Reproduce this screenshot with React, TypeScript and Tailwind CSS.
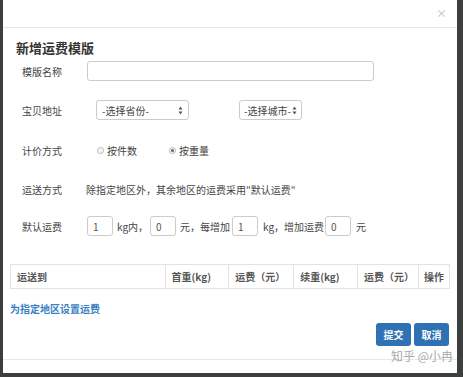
const font = { fontFamily: '"Noto Sans CJK SC", "Liberation Sans", sans-serif' };

function Arrows() {
  return (
    <svg width="5" height="9" viewBox="0 0 5 9" className="ml-auto">
      <path d="M2.5 0.5 L4.5 3.5 H0.5 Z" fill="#555" />
      <path d="M2.5 8.5 L4.5 5.5 H0.5 Z" fill="#555" />
    </svg>
  );
}

function Radio({ checked, label }: { checked?: boolean; label: string }) {
  return (
    <div className="flex items-center gap-[3px]">
      <span className="flex h-[7px] w-[7px] items-center justify-center rounded-full border border-[#bbb] bg-[#f4f4f4]">
        {checked ? <span className="h-[3px] w-[3px] rounded-full bg-[#666]" /> : null}
      </span>
      <span>{label}</span>
    </div>
  );
}

function SmallInput({ value }: { value: string }) {
  return (
    <div className="flex h-[20px] w-[26px] items-center rounded-[3px] border border-[#ccc] bg-white pl-[5px] text-[10px] text-[#555]">
      {value}
    </div>
  );
}

export default function App() {
  const columns = [
    { label: "运送到", w: "w-[154px]" },
    { label: "首重(kg)", w: "w-[64px]" },
    { label: "运费（元）", w: "w-[65px]" },
    { label: "续重(kg)", w: "w-[64px]" },
    { label: "运费（元）", w: "w-[61px]" },
    { label: "操作", w: "flex-1" },
  ];

  return (
    <div className="h-[377px] w-[463px] bg-[#3c3f3e]" style={font}>
      <div className="relative ml-[3px] flex h-[373px] w-[454px] flex-col bg-white text-[10px] text-[#444]">
        <div className="flex h-[28px] items-center justify-end border-b border-[#e6e6e6] pr-[10px]">
          <span className="text-[11px] text-[#bbb]">×</span>
        </div>

        <div className="flex flex-col px-[7px]">
          <div className="mt-[11px] pl-[6px] text-[13px] font-bold leading-[17px] text-[#333]">新增运费模版</div>

          <div className="mt-[5px] flex h-[20px] items-center">
            <span className="w-[77px] pl-[12px]">模版名称</span>
            <div className="h-[20px] w-[287px] rounded-[3px] border border-[#ccc] bg-white" />
          </div>

          <div className="mt-[19px] flex h-[20px] items-center">
            <span className="w-[86px] pl-[12px]">宝贝地址</span>
            <div className="flex h-[20px] w-[93px] items-center rounded-[3px] border border-[#ccc] bg-white px-[5px] text-[#444]">
              -选择省份-
              <Arrows />
            </div>
            <div className="ml-[50px] flex h-[20px] w-[63px] items-center rounded-[3px] border border-[#ccc] bg-white px-[4px] text-[#444]">
              -选择城市-
              <Arrows />
            </div>
          </div>

          <div className="mt-[20px] flex h-[20px] items-center">
            <span className="w-[87px] pl-[12px]">计价方式</span>
            <Radio label="按件数" />
            <div className="ml-[32px]">
              <Radio checked label="按重量" />
            </div>
          </div>

          <div className="mt-[19px] flex h-[20px] items-center">
            <span className="w-[76px] pl-[12px]">运送方式</span>
            <span>除指定地区外，其余地区的运费采用"默认运费"</span>
          </div>

          <div className="mt-[17px] flex h-[20px] items-center">
            <span className="w-[77px] pl-[12px]">默认运费</span>
            <SmallInput value="1" />
            <span className="ml-[4px] w-[33px]">kg内，</span>
            <SmallInput value="0" />
            <span className="ml-[4px] w-[52px]">元，每增加</span>
            <SmallInput value="1" />
            <span className="ml-[5px] w-[62px]">kg，增加运费</span>
            <SmallInput value="0" />
            <span className="ml-[5px]">元</span>
          </div>

          <div className="mt-[28px] flex h-[25px] w-[440px] items-stretch border border-[#e2e2e2] font-semibold text-[#555]">
            {columns.map((c, i) => (
              <div
                key={i}
                className={`flex items-center whitespace-nowrap ${i === 5 ? "px-[5px]" : "px-[6px]"} ${c.w} ${i > 0 ? "border-l border-[#e2e2e2]" : ""}`}
              >
                {c.label}
              </div>
            ))}
          </div>

          <div className="mt-[12px] font-semibold text-[#3a80c4]">为指定地区设置运费</div>

          <div className="mt-[7px] flex justify-end gap-[3px] pr-[1px]">
            <button className="h-[23px] w-[35px] rounded-[3px] bg-[#2f72b3] text-[10px] font-bold text-white">提交</button>
            <button className="h-[23px] w-[35px] rounded-[3px] bg-[#2f72b3] text-[10px] font-bold text-white">取消</button>
          </div>
        </div>

        <div className="mt-[13px] border-t border-[#e8e8e8]" />

        <span className="absolute right-[4px] top-[347px] text-[12px] text-[#a9a9a9]">知乎 @小冉</span>
      </div>
    </div>
  );
}
